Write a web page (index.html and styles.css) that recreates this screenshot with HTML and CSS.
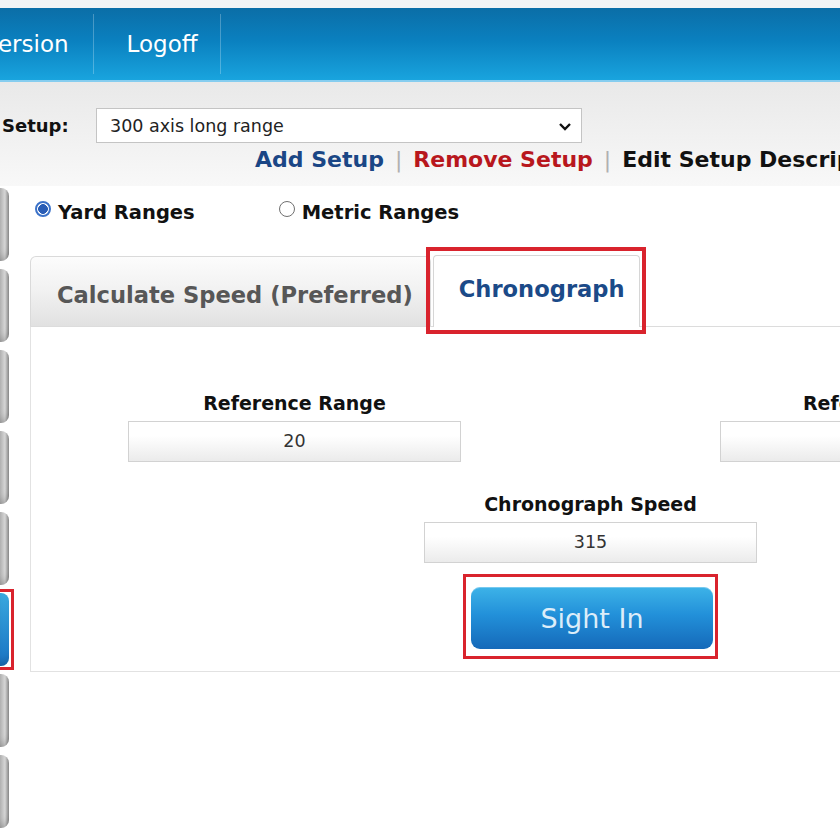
FILE: index.html
```html
<!DOCTYPE html>
<html lang="en">
<head>
    <meta charset="UTF-8">
    <meta name="viewport" content="width=device-width, initial-scale=1.0">
    <title>Sight In</title>
    <link rel="stylesheet" href="styles.css">
</head>
<body>
    <div class="page">
        <div class="top-strip"></div>
        <div class="header">
            <ul class="nav">
                <li class="nav-item first">Version</li>
                <li class="nav-item">Logoff</li>
            </ul>
        </div>

        <div class="toolbar">
            <div class="setup-row">
                <label class="setup-label">Setup:</label>
                <div class="select-box">
                    <span>300 axis long range</span>
                    <svg class="chevron" width="14" height="10" viewBox="0 0 14 10"><path d="M2 2 L7 7 L12 2" fill="none" stroke="#111" stroke-width="2.4"/></svg>
                </div>
            </div>
            <div class="links-row">
                <a class="link add">Add Setup</a>
                <span class="pipe">|</span>
                <a class="link remove">Remove Setup</a>
                <span class="pipe">|</span>
                <a class="link edit">Edit Setup Description</a>
            </div>
        </div>

        <div class="main">
            <div class="sidebar">
                <div class="side-btn"></div>
                <div class="side-btn"></div>
                <div class="side-btn"></div>
                <div class="side-btn"></div>
                <div class="side-btn"></div>
                <div class="side-btn active"></div>
                <div class="side-btn"></div>
                <div class="side-btn"></div>
            </div>

            <div class="content">
                <div class="radio-row">
                    <label class="radio-opt"><span class="radio checked"></span>Yard Ranges</label>
                    <label class="radio-opt metric"><span class="radio"></span>Metric Ranges</label>
                </div>

                <div class="tabs">
                    <div class="tab">Calculate Speed (Preferred)</div>
                    <div class="tab active">Chronograph</div>
                </div>

                <div class="panel">
                    <div class="field-row">
                        <div class="field">
                            <div class="field-label">Reference Range</div>
                            <div class="field-input">20</div>
                        </div>
                        <div class="field">
                            <div class="field-label">Reference Drop</div>
                            <div class="field-input"></div>
                        </div>
                    </div>
                    <div class="field-row second">
                        <div class="field">
                            <div class="field-label">Chronograph Speed</div>
                            <div class="field-input">315</div>
                        </div>
                    </div>
                    <div class="button-row">
                        <div class="highlight">
                            <button class="sight-btn">Sight In</button>
                        </div>
                    </div>
                </div>
            </div>
        </div>
    </div>
</body>
</html>
```

FILE: styles.css
```css
body {
    margin: 0;
    padding: 0;
    font-family: "DejaVu Sans", Verdana, sans-serif;
    background-color: #fff;
    color: #111;
    overflow: hidden;
}

.page {
    width: 840px;
    height: 840px;
    overflow: hidden;
    white-space: nowrap;
}

.top-strip {
    height: 8px;
    background-color: #f2f4f5;
}

/* Blue header bar */
.header {
    height: 72px;
    background: linear-gradient(#0b6ea7, #0a80bf 45%, #19a4de);
    border-bottom: 2px solid #86cdef;
}

.nav {
    list-style: none;
    margin: 0;
    padding: 0;
    display: flex;
    height: 100%;
}

.nav-item {
    display: flex;
    align-items: center;
    padding: 0 22px 0 33px;
    font-size: 23px;
    color: #fff;
    border-right: 1px solid rgba(255, 255, 255, 0.25);
    margin: 6px 0;
}

.nav-item.first {
    margin-left: -49px;
    padding-right: 24px;
}

/* Setup select and links */
.toolbar {
    height: 104px;
    background: linear-gradient(#e9e9e9, #f2f2f2 60%, #f8f8f8);
    box-sizing: border-box;
    padding-top: 26px;
}

.setup-row {
    display: flex;
    align-items: center;
}

.setup-label {
    font-weight: bold;
    font-size: 18px;
    width: 96px;
    padding-left: 2px;
    box-sizing: border-box;
}

.select-box {
    width: 486px;
    height: 35px;
    box-sizing: border-box;
    background-color: #fff;
    border: 1px solid #c4c4c4;
    display: flex;
    align-items: center;
    justify-content: space-between;
    padding: 0 9px 0 13px;
    font-size: 17.5px;
    color: #222;
}

.chevron {
    margin-top: 2px;
}

.links-row {
    display: flex;
    align-items: center;
    margin-top: 2px;
    padding-left: 255px;
    height: 28px;
    font-weight: bold;
    font-size: 22px;
}

.link.add {
    color: #1a4685;
}

.link.remove {
    color: #b8171d;
}

.link.edit {
    color: #111;
}

.pipe {
    color: #b0b0b0;
    font-weight: normal;
    margin: 0 11px;
}

/* Left buttons and content */
.main {
    display: flex;
}

.sidebar {
    width: 30px;
    flex-shrink: 0;
    padding-top: 2px;
}

.side-btn {
    width: 9px;
    height: 73px;
    margin-bottom: 8px;
    border-radius: 0 8px 8px 0;
    background: linear-gradient(90deg, #b4b4b4, #d6d6d6 55%, #888);
    box-shadow: inset 0 -8px 10px -6px rgba(0, 0, 0, 0.25);
}

.side-btn.active {
    position: relative;
    background: linear-gradient(#3aa9e0, #1a74c4);
}

.side-btn.active::after {
    content: "";
    position: absolute;
    top: -4px;
    bottom: -4px;
    left: -4px;
    right: -5px;
    border: 3px solid #d9232d;
}

.content {
    width: 1120px;
    flex-shrink: 0;
}

.radio-row {
    display: flex;
    align-items: center;
    height: 52px;
    margin-bottom: 17px;
    padding-left: 5px;
    font-weight: bold;
    font-size: 19.5px;
}

.radio-opt {
    display: flex;
    align-items: center;
}

.radio-opt.metric {
    margin-left: 84px;
}

.radio {
    width: 16px;
    height: 16px;
    border-radius: 50%;
    border: 1px solid #707070;
    background-color: #fff;
    margin-right: 7px;
    box-sizing: border-box;
    position: relative;
    top: -3px;
}

.radio.checked {
    border: 2px solid #3c72c8;
    background: radial-gradient(circle, #2a5db5 55%, #fff 58%);
}

/* Tabs */
.tabs {
    display: flex;
    align-items: flex-end;
    height: 71px;
    border-bottom: 1px solid #dcdcdc;
}

.tab {
    height: 70px;
    box-sizing: border-box;
    display: flex;
    align-items: center;
    padding: 6px 17px 0 26px;
    font-weight: bold;
    font-size: 22.6px;
    color: #575757;
    background: linear-gradient(#fcfcfc, #f1f1f1 50%, #e1e1e1);
    border: 1px solid #dadada;
    border-bottom: none;
    border-radius: 6px 6px 0 0;
}

.tab.active {
    position: relative;
    height: 72px;
    margin-left: 2px;
    margin-bottom: -1px;
    padding: 0 18px 6px 25px;
    width: 207px;
    color: #1b4a88;
    background: #fff;
    border-color: #d6d6d6;
    border-radius: 4px 4px 0 0;
}

.tab.active::after {
    content: "";
    position: absolute;
    top: -9px;
    bottom: -7px;
    left: -8px;
    right: -7px;
    border: 4px solid #d9232d;
}

.panel {
    border-left: 1px solid #e2e2e2;
    border-bottom: 1px solid #e2e2e2;
    padding: 64px 0 12px;
}

.field-row {
    display: flex;
    justify-content: center;
    gap: 259px;
}

.field-row.second {
    margin-top: 30px;
}

.field {
    width: 333px;
    text-align: center;
}

.field-label {
    font-weight: bold;
    font-size: 19px;
    line-height: 24px;
    margin-bottom: 6px;
}

.field-input {
    height: 41px;
    box-sizing: border-box;
    border: 1px solid #d2d2d2;
    background: linear-gradient(#fff 35%, #ebebeb);
    font-size: 17.5px;
    color: #333;
    line-height: 39px;
}

.button-row {
    display: flex;
    justify-content: center;
    margin-top: 11px;
}

.highlight {
    border: 3px solid #d9232d;
    padding: 10px 2px 7px 5px;
}

.sight-btn {
    width: 242px;
    height: 62px;
    border: none;
    border-radius: 9px;
    background: linear-gradient(#3db3e8, #2290d9 45%, #1569b9);
    color: #dcedf9;
    font-family: "DejaVu Sans", Verdana, sans-serif;
    font-size: 27px;
    box-shadow: inset 0 1px 0 rgba(255, 255, 255, 0.3);
}
```
